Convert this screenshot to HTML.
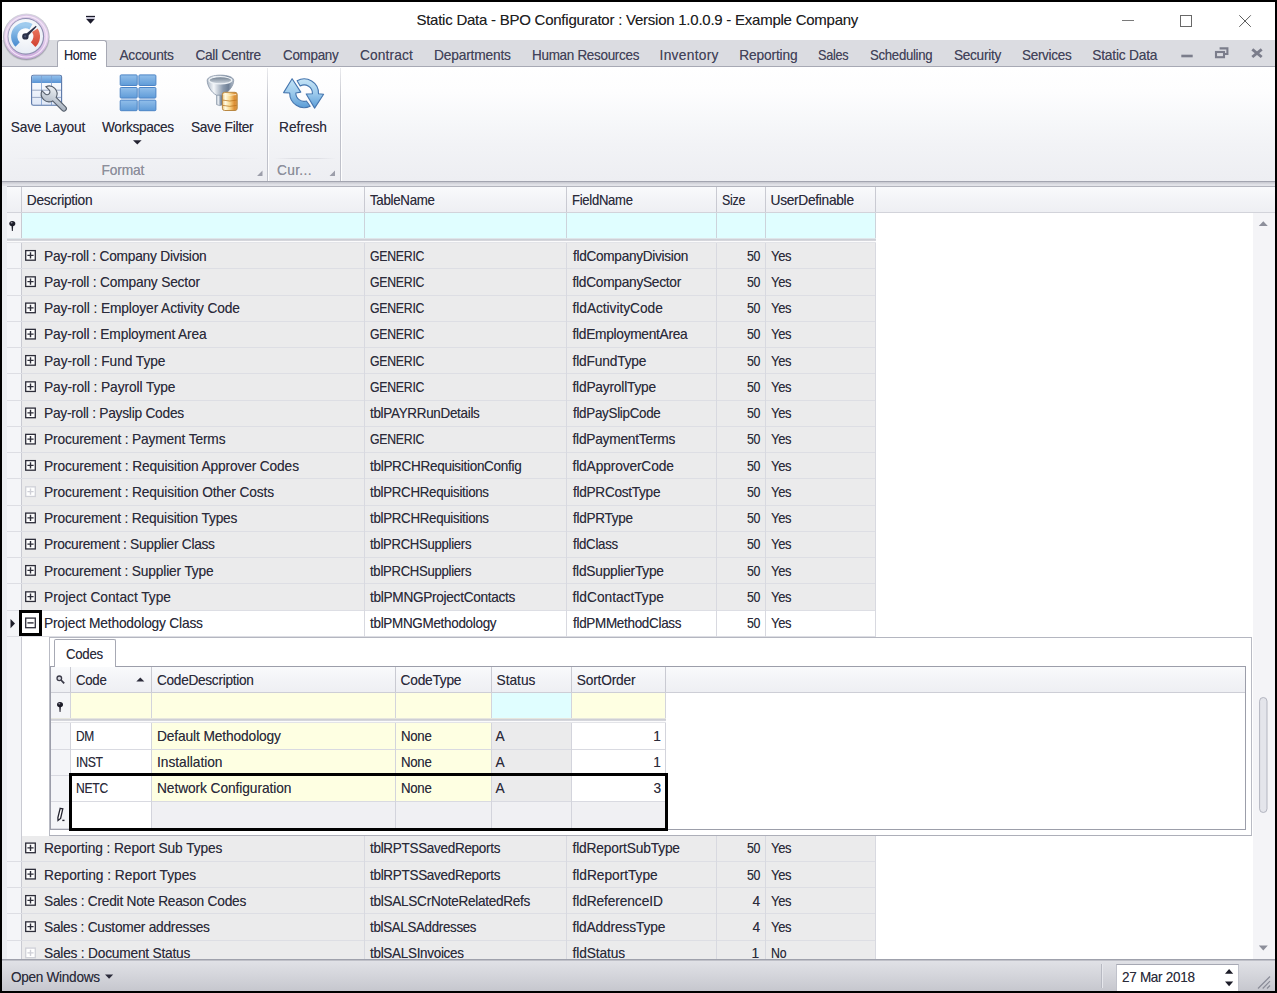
<!DOCTYPE html>
<html><head><meta charset="utf-8"><title>Static Data - BPO Configurator</title>
<style>
html,body{margin:0;padding:0;background:#000;}
body{width:1277px;height:993px;overflow:hidden;position:relative;font-family:"Liberation Sans",sans-serif;}
.a{position:absolute;box-sizing:border-box;}
.t{position:absolute;white-space:pre;transform-origin:0 0;text-shadow:0 0 .6px rgba(43,43,58,.45);}
svg{position:absolute;overflow:visible;}
</style></head><body>
<div class="a" style="left:2px;top:2px;width:1273px;height:989px;background:#fff"></div><span class="t" style="left:416.40px;top:11.40px;font-size:15px;line-height:17px;letter-spacing:-0.242px;color:#1f1f1f;">Static Data - BPO Configurator : Version 1.0.0.9 - Example Company</span><svg style="left:1100px;top:4px" width="170" height="34" viewBox="1100 4 170 34"><g fill="none" stroke="#686868" stroke-width="1"><path d="M1122 20.5H1134" stroke="#7a7a7a"/><rect x="1180.5" y="15.5" width="11" height="11"/><path d="M1239.3 15.3L1250.8 26.8M1250.8 15.3L1239.3 26.8" stroke="#5a5a5a"/></g></svg><svg style="left:84px;top:12px" width="14" height="14" viewBox="84 12 14 14"><rect x="86.2" y="17" width="8.6" height="2" fill="#c9c8d9"/><path d="M86 16.45H95" stroke="#1c1c2c" stroke-width="1.2"/><path d="M86.2 18.9H94.8L90.5 23.8Z" fill="#1c1c2c"/></svg><div class="a" style="left:2px;top:40px;width:1273px;height:27px;background:#dbdce1;border-bottom:1px solid #a7a9b4"></div><div class="a" style="left:57px;top:40px;width:50px;height:27px;background:#fff;border:1px solid #a7a9b4;border-bottom:none;border-radius:3px 3px 0 0"></div><span class="t" style="left:64.00px;top:47.50px;font-size:13.75px;line-height:15px;letter-spacing:-0.300px;color:#23233a;transform:scaleX(0.9141);">Home</span><span class="t" style="left:119.40px;top:47.50px;font-size:13.75px;line-height:15px;letter-spacing:-0.280px;color:#42435a;">Accounts</span><span class="t" style="left:195.40px;top:47.50px;font-size:13.75px;line-height:15px;letter-spacing:-0.300px;color:#42435a;">Call Centre</span><span class="t" style="left:282.80px;top:47.50px;font-size:13.75px;line-height:15px;letter-spacing:-0.300px;color:#42435a;transform:scaleX(0.9762);">Company</span><span class="t" style="left:360.00px;top:47.50px;font-size:13.75px;line-height:15px;letter-spacing:0.114px;color:#42435a;">Contract</span><span class="t" style="left:434.00px;top:47.50px;font-size:13.75px;line-height:15px;letter-spacing:-0.172px;color:#42435a;">Departments</span><span class="t" style="left:531.70px;top:47.50px;font-size:13.75px;line-height:15px;letter-spacing:-0.300px;color:#42435a;transform:scaleX(0.9793);">Human Resources</span><span class="t" style="left:659.50px;top:47.50px;font-size:13.75px;line-height:15px;letter-spacing:0.305px;color:#42435a;">Inventory</span><span class="t" style="left:739.20px;top:47.50px;font-size:13.75px;line-height:15px;letter-spacing:-0.151px;color:#42435a;">Reporting</span><span class="t" style="left:818.00px;top:47.50px;font-size:13.75px;line-height:15px;letter-spacing:-0.300px;color:#42435a;transform:scaleX(0.9215);">Sales</span><span class="t" style="left:869.80px;top:47.50px;font-size:13.75px;line-height:15px;letter-spacing:-0.300px;color:#42435a;transform:scaleX(0.9582);">Scheduling</span><span class="t" style="left:953.60px;top:47.50px;font-size:13.75px;line-height:15px;letter-spacing:-0.300px;color:#42435a;transform:scaleX(0.9922);">Security</span><span class="t" style="left:1022.00px;top:47.50px;font-size:13.75px;line-height:15px;letter-spacing:-0.300px;color:#42435a;transform:scaleX(0.9815);">Services</span><span class="t" style="left:1092.20px;top:47.50px;font-size:13.75px;line-height:15px;letter-spacing:-0.192px;color:#42435a;">Static Data</span><svg style="left:1175px;top:42px" width="95" height="22" viewBox="1175 42 95 22"><g fill="none" stroke="#7b7d8b"><path d="M1181.3 56H1192.7" stroke-width="2.6"/><path d="M1219.6 48.4h7.8v5.6h-3" stroke-width="2.1"/><rect x="1216" y="52" width="8" height="5.2" stroke-width="2.1"/><path d="M1252.3 49.3L1261.7 57M1261.7 49.3L1252.3 57" stroke-width="2.9"/></g></svg><div class="a" style="left:2px;top:67px;width:1273px;height:114px;background:linear-gradient(#ffffff 0%,#fdfdfe 22%,#f7f8fa 45%,#f2f3f6 68%,#edeef2 100%)"></div><div class="a" style="left:2px;top:181px;width:1273px;height:1px;background:#a3a5b0"></div><div class="a" style="left:2px;top:182px;width:1273px;height:4px;background:linear-gradient(#c6c7cf,#e3e4e9 70%)"></div><div class="a" style="left:267px;top:68px;width:1px;height:113px;background:linear-gradient(rgba(190,192,201,.3),#bfc1ca 30%,#bfc1ca)"></div><div class="a" style="left:268px;top:68px;width:1px;height:113px;background:rgba(255,255,255,.9)"></div><div class="a" style="left:340px;top:68px;width:1px;height:113px;background:linear-gradient(rgba(190,192,201,.3),#bfc1ca 30%,#bfc1ca)"></div><div class="a" style="left:341px;top:68px;width:1px;height:113px;background:rgba(255,255,255,.9)"></div><div class="a" style="left:12px;top:158px;width:250px;height:1px;background:linear-gradient(90deg,rgba(200,202,210,0),#dddee4 30%,#dddee4 70%,rgba(200,202,210,0))"></div><div class="a" style="left:274px;top:158px;width:62px;height:1px;background:linear-gradient(90deg,rgba(200,202,210,0),#dddee4 30%,#dddee4 70%,rgba(200,202,210,0))"></div><span class="t" style="left:10.70px;top:119.90px;font-size:13.75px;line-height:15px;letter-spacing:-0.178px;color:#2b2b3a;">Save Layout</span><span class="t" style="left:102.00px;top:119.90px;font-size:13.75px;line-height:15px;letter-spacing:-0.300px;color:#2b2b3a;transform:scaleX(0.9930);">Workspaces</span><span class="t" style="left:190.90px;top:119.90px;font-size:13.75px;line-height:15px;letter-spacing:-0.295px;color:#2b2b3a;">Save Filter</span><span class="t" style="left:279.00px;top:119.90px;font-size:13.75px;line-height:15px;letter-spacing:-0.023px;color:#2b2b3a;">Refresh</span><span class="t" style="left:101.50px;top:162.80px;font-size:13.75px;line-height:15px;letter-spacing:-0.155px;color:#8d8f9c;">Format</span><span class="t" style="left:277.00px;top:162.80px;font-size:13.75px;line-height:15px;letter-spacing:0.322px;color:#8d8f9c;">Cur...</span><svg style="left:130px;top:138px" width="14" height="8" viewBox="130 138 14 8"><path d="M133 140.3H141.6L137.3 144.6Z" fill="#222230"/></svg><svg style="left:254px;top:168px" width="84" height="10" viewBox="254 168 84 10"><path d="M262.5 170.5V176H257Z M335 170.5V176H329.5Z" fill="#9c9eaa"/></svg><svg style="left:0;top:8px" width="56" height="58" viewBox="0 8 56 58"><defs><linearGradient id="ag1" x1="0" y1="0" x2="0" y2="1"><stop offset="0" stop-color="#d6d6de"/><stop offset="1" stop-color="#9d9daa"/></linearGradient><linearGradient id="ag2" x1="0" y1="0" x2="0" y2="1"><stop offset="0" stop-color="#d9c6e6"/><stop offset=".5" stop-color="#e9d3f0"/><stop offset="1" stop-color="#caa9dc"/></linearGradient><radialGradient id="ag3" cx=".5" cy=".35" r=".7"><stop offset="0" stop-color="#ffffff"/><stop offset="1" stop-color="#e6ebf4"/></radialGradient><linearGradient id="ag4" x1="0" y1="0" x2="0" y2="1"><stop offset="0" stop-color="#9fcbee"/><stop offset="1" stop-color="#4f90d2"/></linearGradient><linearGradient id="ag5" x1="0" y1="0" x2="0" y2="1"><stop offset="0" stop-color="#e8705a"/><stop offset="1" stop-color="#d44736"/></linearGradient></defs><circle cx="26.3" cy="37.4" r="23.4" fill="rgba(120,120,135,.25)"/><circle cx="26.3" cy="36.7" r="23.2" fill="url(#ag1)"/><circle cx="26.3" cy="36.7" r="22.2" fill="url(#ag2)"/><circle cx="26.3" cy="36.7" r="20.3" fill="none" stroke="#f3e6f7" stroke-width="1.2"/><circle cx="25.9" cy="36.4" r="18.3" fill="#8e8fb0"/><circle cx="25.7" cy="36.3" r="17.3" fill="url(#ag3)"/><path d="M17.62 44.46A11.20 11.20 0 0 1 31.00 26.70" fill="none" stroke="url(#ag4)" stroke-width="6.20"/><path d="M34.88 30.25A11.30 11.30 0 0 1 33.11 44.66" fill="none" stroke="url(#ag5)" stroke-width="6.60"/><path d="M24.3 35.2L35.9 25.8L36.6 26.7L26.6 37.6Z" fill="#2b3048"/><circle cx="25.4" cy="36.4" r="3.2" fill="#2b3048"/><circle cx="25.2" cy="36.3" r="1.1" fill="#4d5678"/></svg><svg style="left:28px;top:72px" width="42" height="42" viewBox="28 72 42 42"><defs><linearGradient id="sl1" x1="0" y1="0" x2="0" y2="1"><stop offset="0" stop-color="#92c0ec"/><stop offset="1" stop-color="#5a94d4"/></linearGradient><linearGradient id="sl2" x1="0" y1="0" x2="0" y2="1"><stop offset="0" stop-color="#ffffff"/><stop offset="1" stop-color="#dfe8f7"/></linearGradient><linearGradient id="sl3" x1="0" y1="0" x2="1" y2="1"><stop offset="0" stop-color="#f4f6f8"/><stop offset=".5" stop-color="#c4ccd6"/><stop offset="1" stop-color="#8f9aaa"/></linearGradient></defs><rect x="31.6" y="75.2" width="30" height="30" rx="1.8" fill="url(#sl2)" stroke="#5876a8" stroke-width="1.1"/><path d="M32.1 76.9q0-1.2 1.2-1.2h26.6q1.2 0 1.2 1.2V83H32.1Z" fill="url(#sl1)"/><path d="M41.5 75.7V105M51.5 75.7V105" stroke="#7f9fcf" stroke-width="1" opacity=".8"/><path d="M32.1 90.2H61M32.1 97.4H61" stroke="#8b9cbb" stroke-width="1" opacity=".85"/><g transform="translate(49.1 93.9) rotate(45)"><path d="M-7.38 -2.8A7.9 7.9 0 0 1 7.5 -2.45L20.9 -2.45A2.45 2.45 0 0 1 20.9 2.45L7.5 2.45A7.9 7.9 0 0 1 -7.38 2.8L-2.8 2.8A2.8 2.8 0 0 0 -2.8 -2.8Z" fill="url(#sl3)" stroke="#555e6b" stroke-width="1.1"/></g></svg><svg style="left:118px;top:72px" width="42" height="42" viewBox="118 72 42 42"><defs><linearGradient id="ws1" x1="0" y1="0" x2="0" y2="1"><stop offset="0" stop-color="#92bfea"/><stop offset="1" stop-color="#5f9bd8"/></linearGradient></defs><rect x="120.2" y="74.9" width="17" height="10.6" rx="1" fill="url(#ws1)" stroke="#4c84c6" stroke-width="1"/><rect x="138.9" y="74.9" width="17" height="10.6" rx="1" fill="url(#ws1)" stroke="#4c84c6" stroke-width="1"/><rect x="120.2" y="87.5" width="17" height="10.6" rx="1" fill="url(#ws1)" stroke="#4c84c6" stroke-width="1"/><rect x="138.9" y="87.5" width="17" height="10.6" rx="1" fill="url(#ws1)" stroke="#4c84c6" stroke-width="1"/><rect x="120.2" y="100.1" width="17" height="10.6" rx="1" fill="url(#ws1)" stroke="#4c84c6" stroke-width="1"/><rect x="138.9" y="100.1" width="17" height="10.6" rx="1" fill="url(#ws1)" stroke="#4c84c6" stroke-width="1"/></svg><svg style="left:204px;top:72px" width="38" height="42" viewBox="204 72 38 42"><defs><linearGradient id="sf1" x1="0" y1="0" x2="1" y2="0"><stop offset="0" stop-color="#aeb9c6"/><stop offset=".25" stop-color="#f4f7fa"/><stop offset=".6" stop-color="#8c9bae"/><stop offset=".8" stop-color="#6f8096"/><stop offset="1" stop-color="#b9c3cf"/></linearGradient><linearGradient id="sf2" x1="0" y1="0" x2="0" y2="1"><stop offset="0" stop-color="#6c7b8c"/><stop offset="1" stop-color="#d5dce4"/></linearGradient><linearGradient id="sf3" x1="0" y1="0" x2="1" y2="0"><stop offset="0" stop-color="#edc47c"/><stop offset=".2" stop-color="#fffbe4"/><stop offset=".5" stop-color="#f9d88e"/><stop offset=".8" stop-color="#de9136"/><stop offset="1" stop-color="#d6954a"/></linearGradient></defs><path d="M216.6 92H222.9V104.6Q219.7 106.6 216.6 104.6Z" fill="url(#sf1)" stroke="#8391a2" stroke-width=".7"/><path d="M207.2 80.4C207.2 73.4 233.7 73.4 233.7 80.4C233.7 86 228 92.5 223.2 95.2H216.4C211.5 92.5 207.2 86 207.2 80.4Z" fill="url(#sf1)" stroke="#8492a4" stroke-width=".8"/><ellipse cx="220.4" cy="80.3" rx="11.4" ry="3.6" fill="url(#sf2)" stroke="#eef2f6" stroke-width="1.2"/><rect x="222.4" y="92.3" width="14.8" height="18.2" rx="2.2" fill="url(#sf3)" stroke="#b98842" stroke-width="1"/><path d="M222.9 100.1Q229.8 102 236.7 100.1M222.9 105.4Q229.8 107.3 236.7 105.4" fill="none" stroke="#b9741f" stroke-width="1" opacity=".75"/><path d="M223.4 94.5Q229.8 96 236.2 94.5" fill="none" stroke="#fff7dc" stroke-width="1" opacity=".8"/></svg><svg style="left:280px;top:74px" width="48" height="40" viewBox="280 74 48 40"><defs><linearGradient id="rf1" x1="0" y1="0" x2="0" y2="1"><stop offset="0" stop-color="#c5e4f6"/><stop offset=".5" stop-color="#9ccaec"/><stop offset="1" stop-color="#5b9cd6"/></linearGradient></defs><g fill="url(#rf1)" stroke="#4575ae" stroke-width="1.1" stroke-linejoin="round"><path d="M297.1 80.7A14.4 14.4 0 0 1 318.5 93.8L323.6 94.2L314.6 108.1L306.2 94L312.4 93.8A8.3 8.3 0 0 0 300.2 86Z"/><path d="M292.1 78.7L300.8 92.1L295.8 93A8.3 8.3 0 0 0 306.4 101L310.2 106.2A14.4 14.4 0 0 1 289.7 93L283.6 92.6Z"/></g></svg><div class="a" style="left:2px;top:186px;width:1273px;height:773px;background:#eceef2"></div><div class="a" style="left:7px;top:186px;width:1268px;height:773px;background:#fff"></div><div class="a" style="left:7px;top:186px;width:1268px;height:27px;background:linear-gradient(#f9fafc,#f3f4f7 50%,#eeeff3);border-top:1px solid #b3b5be;border-bottom:1px solid #d2d3da"></div><div class="a" style="left:21px;top:187px;width:1px;height:25px;background:#c9cad2"></div><div class="a" style="left:364px;top:187px;width:1px;height:25px;background:#c9cad2"></div><div class="a" style="left:566px;top:187px;width:1px;height:25px;background:#c9cad2"></div><div class="a" style="left:716px;top:187px;width:1px;height:25px;background:#c9cad2"></div><div class="a" style="left:765px;top:187px;width:1px;height:25px;background:#c9cad2"></div><div class="a" style="left:875px;top:187px;width:1px;height:25px;background:#c9cad2"></div><span class="t" style="left:26.80px;top:192.80px;font-size:13.75px;line-height:15px;letter-spacing:-0.300px;color:#2b2b3a;">Description</span><span class="t" style="left:370.10px;top:192.80px;font-size:13.75px;line-height:15px;letter-spacing:-0.300px;color:#2b2b3a;transform:scaleX(0.9665);">TableName</span><span class="t" style="left:571.80px;top:192.80px;font-size:13.75px;line-height:15px;letter-spacing:-0.300px;color:#2b2b3a;transform:scaleX(0.9505);">FieldName</span><span class="t" style="left:721.70px;top:192.80px;font-size:13.75px;line-height:15px;letter-spacing:-0.300px;color:#2b2b3a;transform:scaleX(0.9019);">Size</span><span class="t" style="left:770.50px;top:192.80px;font-size:13.75px;line-height:15px;letter-spacing:-0.300px;color:#2b2b3a;">UserDefinable</span><div class="a" style="left:7px;top:213px;width:15px;height:26px;background:#f4f5f8;border-right:1px solid #c9cad2"></div><div class="a" style="left:22px;top:213px;width:854px;height:26px;background:#e0feff"></div><div class="a" style="left:364px;top:213px;width:1px;height:26px;background:#cdd3db"></div><div class="a" style="left:566px;top:213px;width:1px;height:26px;background:#cdd3db"></div><div class="a" style="left:716px;top:213px;width:1px;height:26px;background:#cdd3db"></div><div class="a" style="left:765px;top:213px;width:1px;height:26px;background:#cdd3db"></div><div class="a" style="left:875px;top:213px;width:1px;height:26px;background:#cdd3db"></div><svg style="left:8px;top:219px" width="10" height="14" viewBox="8 219 10 14"><ellipse cx="12.3" cy="223.5" rx="3" ry="2.6" fill="#1c1c28"/><path d="M11.4 224.5L11.9 231h.9l.5-6.5Z" fill="#1c1c28"/><ellipse cx="11.6" cy="222.8" rx="1" ry=".7" fill="#9a9aa6"/></svg><div class="a" style="left:7px;top:238px;width:869px;height:1px;background:#dfe6ea"></div><div class="a" style="left:7px;top:239px;width:869px;height:2px;background:linear-gradient(#cbccd3,#d9dadf)"></div><div class="a" style="left:7px;top:241px;width:869px;height:1px;background:#fbfbfc"></div><div class="a" style="left:7px;top:242px;width:869px;height:1px;background:#e3e4e8"></div><div class="a" style="left:7px;top:243px;width:15px;height:716px;background:#f4f5f8;border-right:1px solid #c9cad2"></div><div class="a" style="left:0;top:0;width:1277px;height:959px;overflow:hidden"><div class="a" style="left:22px;top:243px;width:854px;height:26.25px;background:#ebebec;border-bottom:1px solid #dddee4"></div><div class="a" style="left:7px;top:268.25px;width:15px;height:1px;background:#dddee4"></div><div class="a" style="left:364px;top:243px;width:1px;height:26.25px;background:#d8d9e0"></div><div class="a" style="left:566px;top:243px;width:1px;height:26.25px;background:#d8d9e0"></div><div class="a" style="left:716px;top:243px;width:1px;height:26.25px;background:#d8d9e0"></div><div class="a" style="left:765px;top:243px;width:1px;height:26.25px;background:#d8d9e0"></div><div class="a" style="left:875px;top:243px;width:1px;height:26.25px;background:#d8d9e0"></div><span class="t" style="left:44.00px;top:248.60px;font-size:13.75px;line-height:15px;letter-spacing:-0.237px;color:#2b2b3a;">Pay-roll : Company Division</span><span class="t" style="left:369.60px;top:248.60px;font-size:13.75px;line-height:15px;letter-spacing:-0.300px;color:#2b2b3a;transform:scaleX(0.8944);">GENERIC</span><span class="t" style="left:572.50px;top:248.60px;font-size:13.75px;line-height:15px;letter-spacing:-0.300px;color:#2b2b3a;transform:scaleX(0.9906);">fldCompanyDivision</span><span class="t" style="left:746.50px;top:248.60px;font-size:13.75px;line-height:15px;letter-spacing:-0.300px;color:#2b2b3a;transform:scaleX(0.9012);">50</span><span class="t" style="left:771.00px;top:248.60px;font-size:13.75px;line-height:15px;letter-spacing:-0.300px;color:#2b2b3a;transform:scaleX(0.9433);">Yes</span><div class="a" style="left:22px;top:269.25px;width:854px;height:26.25px;background:#ebebec;border-bottom:1px solid #dddee4"></div><div class="a" style="left:7px;top:294.5px;width:15px;height:1px;background:#dddee4"></div><div class="a" style="left:364px;top:269.25px;width:1px;height:26.25px;background:#d8d9e0"></div><div class="a" style="left:566px;top:269.25px;width:1px;height:26.25px;background:#d8d9e0"></div><div class="a" style="left:716px;top:269.25px;width:1px;height:26.25px;background:#d8d9e0"></div><div class="a" style="left:765px;top:269.25px;width:1px;height:26.25px;background:#d8d9e0"></div><div class="a" style="left:875px;top:269.25px;width:1px;height:26.25px;background:#d8d9e0"></div><span class="t" style="left:44.00px;top:274.85px;font-size:13.75px;line-height:15px;letter-spacing:-0.188px;color:#2b2b3a;">Pay-roll : Company Sector</span><span class="t" style="left:369.60px;top:274.85px;font-size:13.75px;line-height:15px;letter-spacing:-0.300px;color:#2b2b3a;transform:scaleX(0.8944);">GENERIC</span><span class="t" style="left:572.50px;top:274.85px;font-size:13.75px;line-height:15px;letter-spacing:-0.289px;color:#2b2b3a;">fldCompanySector</span><span class="t" style="left:746.50px;top:274.85px;font-size:13.75px;line-height:15px;letter-spacing:-0.300px;color:#2b2b3a;transform:scaleX(0.9012);">50</span><span class="t" style="left:771.00px;top:274.85px;font-size:13.75px;line-height:15px;letter-spacing:-0.300px;color:#2b2b3a;transform:scaleX(0.9433);">Yes</span><div class="a" style="left:22px;top:295.5px;width:854px;height:26.25px;background:#ebebec;border-bottom:1px solid #dddee4"></div><div class="a" style="left:7px;top:320.75px;width:15px;height:1px;background:#dddee4"></div><div class="a" style="left:364px;top:295.5px;width:1px;height:26.25px;background:#d8d9e0"></div><div class="a" style="left:566px;top:295.5px;width:1px;height:26.25px;background:#d8d9e0"></div><div class="a" style="left:716px;top:295.5px;width:1px;height:26.25px;background:#d8d9e0"></div><div class="a" style="left:765px;top:295.5px;width:1px;height:26.25px;background:#d8d9e0"></div><div class="a" style="left:875px;top:295.5px;width:1px;height:26.25px;background:#d8d9e0"></div><span class="t" style="left:44.00px;top:301.10px;font-size:13.75px;line-height:15px;letter-spacing:-0.107px;color:#2b2b3a;">Pay-roll : Employer Activity Code</span><span class="t" style="left:369.60px;top:301.10px;font-size:13.75px;line-height:15px;letter-spacing:-0.300px;color:#2b2b3a;transform:scaleX(0.8944);">GENERIC</span><span class="t" style="left:572.50px;top:301.10px;font-size:13.75px;line-height:15px;letter-spacing:-0.046px;color:#2b2b3a;">fldActivityCode</span><span class="t" style="left:746.50px;top:301.10px;font-size:13.75px;line-height:15px;letter-spacing:-0.300px;color:#2b2b3a;transform:scaleX(0.9012);">50</span><span class="t" style="left:771.00px;top:301.10px;font-size:13.75px;line-height:15px;letter-spacing:-0.300px;color:#2b2b3a;transform:scaleX(0.9433);">Yes</span><div class="a" style="left:22px;top:321.75px;width:854px;height:26.25px;background:#ebebec;border-bottom:1px solid #dddee4"></div><div class="a" style="left:7px;top:347px;width:15px;height:1px;background:#dddee4"></div><div class="a" style="left:364px;top:321.75px;width:1px;height:26.25px;background:#d8d9e0"></div><div class="a" style="left:566px;top:321.75px;width:1px;height:26.25px;background:#d8d9e0"></div><div class="a" style="left:716px;top:321.75px;width:1px;height:26.25px;background:#d8d9e0"></div><div class="a" style="left:765px;top:321.75px;width:1px;height:26.25px;background:#d8d9e0"></div><div class="a" style="left:875px;top:321.75px;width:1px;height:26.25px;background:#d8d9e0"></div><span class="t" style="left:44.00px;top:327.35px;font-size:13.75px;line-height:15px;letter-spacing:-0.158px;color:#2b2b3a;">Pay-roll : Employment Area</span><span class="t" style="left:369.60px;top:327.35px;font-size:13.75px;line-height:15px;letter-spacing:-0.300px;color:#2b2b3a;transform:scaleX(0.8944);">GENERIC</span><span class="t" style="left:572.50px;top:327.35px;font-size:13.75px;line-height:15px;letter-spacing:-0.296px;color:#2b2b3a;">fldEmploymentArea</span><span class="t" style="left:746.50px;top:327.35px;font-size:13.75px;line-height:15px;letter-spacing:-0.300px;color:#2b2b3a;transform:scaleX(0.9012);">50</span><span class="t" style="left:771.00px;top:327.35px;font-size:13.75px;line-height:15px;letter-spacing:-0.300px;color:#2b2b3a;transform:scaleX(0.9433);">Yes</span><div class="a" style="left:22px;top:348px;width:854px;height:26.25px;background:#ebebec;border-bottom:1px solid #dddee4"></div><div class="a" style="left:7px;top:373.25px;width:15px;height:1px;background:#dddee4"></div><div class="a" style="left:364px;top:348px;width:1px;height:26.25px;background:#d8d9e0"></div><div class="a" style="left:566px;top:348px;width:1px;height:26.25px;background:#d8d9e0"></div><div class="a" style="left:716px;top:348px;width:1px;height:26.25px;background:#d8d9e0"></div><div class="a" style="left:765px;top:348px;width:1px;height:26.25px;background:#d8d9e0"></div><div class="a" style="left:875px;top:348px;width:1px;height:26.25px;background:#d8d9e0"></div><span class="t" style="left:44.00px;top:353.60px;font-size:13.75px;line-height:15px;letter-spacing:-0.073px;color:#2b2b3a;">Pay-roll : Fund Type</span><span class="t" style="left:369.60px;top:353.60px;font-size:13.75px;line-height:15px;letter-spacing:-0.300px;color:#2b2b3a;transform:scaleX(0.8944);">GENERIC</span><span class="t" style="left:572.50px;top:353.60px;font-size:13.75px;line-height:15px;letter-spacing:-0.167px;color:#2b2b3a;">fldFundType</span><span class="t" style="left:746.50px;top:353.60px;font-size:13.75px;line-height:15px;letter-spacing:-0.300px;color:#2b2b3a;transform:scaleX(0.9012);">50</span><span class="t" style="left:771.00px;top:353.60px;font-size:13.75px;line-height:15px;letter-spacing:-0.300px;color:#2b2b3a;transform:scaleX(0.9433);">Yes</span><div class="a" style="left:22px;top:374.25px;width:854px;height:26.25px;background:#ebebec;border-bottom:1px solid #dddee4"></div><div class="a" style="left:7px;top:399.5px;width:15px;height:1px;background:#dddee4"></div><div class="a" style="left:364px;top:374.25px;width:1px;height:26.25px;background:#d8d9e0"></div><div class="a" style="left:566px;top:374.25px;width:1px;height:26.25px;background:#d8d9e0"></div><div class="a" style="left:716px;top:374.25px;width:1px;height:26.25px;background:#d8d9e0"></div><div class="a" style="left:765px;top:374.25px;width:1px;height:26.25px;background:#d8d9e0"></div><div class="a" style="left:875px;top:374.25px;width:1px;height:26.25px;background:#d8d9e0"></div><span class="t" style="left:44.00px;top:379.85px;font-size:13.75px;line-height:15px;letter-spacing:-0.094px;color:#2b2b3a;">Pay-roll : Payroll Type</span><span class="t" style="left:369.60px;top:379.85px;font-size:13.75px;line-height:15px;letter-spacing:-0.300px;color:#2b2b3a;transform:scaleX(0.8944);">GENERIC</span><span class="t" style="left:572.50px;top:379.85px;font-size:13.75px;line-height:15px;letter-spacing:-0.205px;color:#2b2b3a;">fldPayrollType</span><span class="t" style="left:746.50px;top:379.85px;font-size:13.75px;line-height:15px;letter-spacing:-0.300px;color:#2b2b3a;transform:scaleX(0.9012);">50</span><span class="t" style="left:771.00px;top:379.85px;font-size:13.75px;line-height:15px;letter-spacing:-0.300px;color:#2b2b3a;transform:scaleX(0.9433);">Yes</span><div class="a" style="left:22px;top:400.5px;width:854px;height:26.25px;background:#ebebec;border-bottom:1px solid #dddee4"></div><div class="a" style="left:7px;top:425.75px;width:15px;height:1px;background:#dddee4"></div><div class="a" style="left:364px;top:400.5px;width:1px;height:26.25px;background:#d8d9e0"></div><div class="a" style="left:566px;top:400.5px;width:1px;height:26.25px;background:#d8d9e0"></div><div class="a" style="left:716px;top:400.5px;width:1px;height:26.25px;background:#d8d9e0"></div><div class="a" style="left:765px;top:400.5px;width:1px;height:26.25px;background:#d8d9e0"></div><div class="a" style="left:875px;top:400.5px;width:1px;height:26.25px;background:#d8d9e0"></div><span class="t" style="left:44.00px;top:406.10px;font-size:13.75px;line-height:15px;letter-spacing:-0.251px;color:#2b2b3a;">Pay-roll : Payslip Codes</span><span class="t" style="left:370.00px;top:406.10px;font-size:13.75px;line-height:15px;letter-spacing:-0.300px;color:#2b2b3a;transform:scaleX(0.9770);">tblPAYRRunDetails</span><span class="t" style="left:572.50px;top:406.10px;font-size:13.75px;line-height:15px;letter-spacing:-0.300px;color:#2b2b3a;transform:scaleX(0.9745);">fldPaySlipCode</span><span class="t" style="left:746.50px;top:406.10px;font-size:13.75px;line-height:15px;letter-spacing:-0.300px;color:#2b2b3a;transform:scaleX(0.9012);">50</span><span class="t" style="left:771.00px;top:406.10px;font-size:13.75px;line-height:15px;letter-spacing:-0.300px;color:#2b2b3a;transform:scaleX(0.9433);">Yes</span><div class="a" style="left:22px;top:426.75px;width:854px;height:26.25px;background:#ebebec;border-bottom:1px solid #dddee4"></div><div class="a" style="left:7px;top:452px;width:15px;height:1px;background:#dddee4"></div><div class="a" style="left:364px;top:426.75px;width:1px;height:26.25px;background:#d8d9e0"></div><div class="a" style="left:566px;top:426.75px;width:1px;height:26.25px;background:#d8d9e0"></div><div class="a" style="left:716px;top:426.75px;width:1px;height:26.25px;background:#d8d9e0"></div><div class="a" style="left:765px;top:426.75px;width:1px;height:26.25px;background:#d8d9e0"></div><div class="a" style="left:875px;top:426.75px;width:1px;height:26.25px;background:#d8d9e0"></div><span class="t" style="left:44.00px;top:432.35px;font-size:13.75px;line-height:15px;letter-spacing:-0.151px;color:#2b2b3a;">Procurement : Payment Terms</span><span class="t" style="left:369.60px;top:432.35px;font-size:13.75px;line-height:15px;letter-spacing:-0.300px;color:#2b2b3a;transform:scaleX(0.8944);">GENERIC</span><span class="t" style="left:572.50px;top:432.35px;font-size:13.75px;line-height:15px;letter-spacing:-0.244px;color:#2b2b3a;">fldPaymentTerms</span><span class="t" style="left:746.50px;top:432.35px;font-size:13.75px;line-height:15px;letter-spacing:-0.300px;color:#2b2b3a;transform:scaleX(0.9012);">50</span><span class="t" style="left:771.00px;top:432.35px;font-size:13.75px;line-height:15px;letter-spacing:-0.300px;color:#2b2b3a;transform:scaleX(0.9433);">Yes</span><div class="a" style="left:22px;top:453px;width:854px;height:26.25px;background:#ebebec;border-bottom:1px solid #dddee4"></div><div class="a" style="left:7px;top:478.25px;width:15px;height:1px;background:#dddee4"></div><div class="a" style="left:364px;top:453px;width:1px;height:26.25px;background:#d8d9e0"></div><div class="a" style="left:566px;top:453px;width:1px;height:26.25px;background:#d8d9e0"></div><div class="a" style="left:716px;top:453px;width:1px;height:26.25px;background:#d8d9e0"></div><div class="a" style="left:765px;top:453px;width:1px;height:26.25px;background:#d8d9e0"></div><div class="a" style="left:875px;top:453px;width:1px;height:26.25px;background:#d8d9e0"></div><span class="t" style="left:44.00px;top:458.60px;font-size:13.75px;line-height:15px;letter-spacing:-0.144px;color:#2b2b3a;">Procurement : Requisition Approver Codes</span><span class="t" style="left:370.00px;top:458.60px;font-size:13.75px;line-height:15px;letter-spacing:-0.300px;color:#2b2b3a;transform:scaleX(0.9828);">tblPRCHRequisitionConfig</span><span class="t" style="left:572.50px;top:458.60px;font-size:13.75px;line-height:15px;letter-spacing:-0.134px;color:#2b2b3a;">fldApproverCode</span><span class="t" style="left:746.50px;top:458.60px;font-size:13.75px;line-height:15px;letter-spacing:-0.300px;color:#2b2b3a;transform:scaleX(0.9012);">50</span><span class="t" style="left:771.00px;top:458.60px;font-size:13.75px;line-height:15px;letter-spacing:-0.300px;color:#2b2b3a;transform:scaleX(0.9433);">Yes</span><div class="a" style="left:22px;top:479.25px;width:854px;height:26.25px;background:#ebebec;border-bottom:1px solid #dddee4"></div><div class="a" style="left:7px;top:504.5px;width:15px;height:1px;background:#dddee4"></div><div class="a" style="left:364px;top:479.25px;width:1px;height:26.25px;background:#d8d9e0"></div><div class="a" style="left:566px;top:479.25px;width:1px;height:26.25px;background:#d8d9e0"></div><div class="a" style="left:716px;top:479.25px;width:1px;height:26.25px;background:#d8d9e0"></div><div class="a" style="left:765px;top:479.25px;width:1px;height:26.25px;background:#d8d9e0"></div><div class="a" style="left:875px;top:479.25px;width:1px;height:26.25px;background:#d8d9e0"></div><span class="t" style="left:44.00px;top:484.85px;font-size:13.75px;line-height:15px;letter-spacing:-0.149px;color:#2b2b3a;">Procurement : Requisition Other Costs</span><span class="t" style="left:370.00px;top:484.85px;font-size:13.75px;line-height:15px;letter-spacing:-0.300px;color:#2b2b3a;transform:scaleX(0.9676);">tblPRCHRequisitions</span><span class="t" style="left:572.50px;top:484.85px;font-size:13.75px;line-height:15px;letter-spacing:-0.300px;color:#2b2b3a;transform:scaleX(0.9932);">fldPRCostType</span><span class="t" style="left:746.50px;top:484.85px;font-size:13.75px;line-height:15px;letter-spacing:-0.300px;color:#2b2b3a;transform:scaleX(0.9012);">50</span><span class="t" style="left:771.00px;top:484.85px;font-size:13.75px;line-height:15px;letter-spacing:-0.300px;color:#2b2b3a;transform:scaleX(0.9433);">Yes</span><div class="a" style="left:22px;top:505.5px;width:854px;height:26.25px;background:#ebebec;border-bottom:1px solid #dddee4"></div><div class="a" style="left:7px;top:530.75px;width:15px;height:1px;background:#dddee4"></div><div class="a" style="left:364px;top:505.5px;width:1px;height:26.25px;background:#d8d9e0"></div><div class="a" style="left:566px;top:505.5px;width:1px;height:26.25px;background:#d8d9e0"></div><div class="a" style="left:716px;top:505.5px;width:1px;height:26.25px;background:#d8d9e0"></div><div class="a" style="left:765px;top:505.5px;width:1px;height:26.25px;background:#d8d9e0"></div><div class="a" style="left:875px;top:505.5px;width:1px;height:26.25px;background:#d8d9e0"></div><span class="t" style="left:44.00px;top:511.10px;font-size:13.75px;line-height:15px;letter-spacing:-0.166px;color:#2b2b3a;">Procurement : Requisition Types</span><span class="t" style="left:370.00px;top:511.10px;font-size:13.75px;line-height:15px;letter-spacing:-0.300px;color:#2b2b3a;transform:scaleX(0.9676);">tblPRCHRequisitions</span><span class="t" style="left:572.50px;top:511.10px;font-size:13.75px;line-height:15px;letter-spacing:-0.300px;color:#2b2b3a;transform:scaleX(0.9857);">fldPRType</span><span class="t" style="left:746.50px;top:511.10px;font-size:13.75px;line-height:15px;letter-spacing:-0.300px;color:#2b2b3a;transform:scaleX(0.9012);">50</span><span class="t" style="left:771.00px;top:511.10px;font-size:13.75px;line-height:15px;letter-spacing:-0.300px;color:#2b2b3a;transform:scaleX(0.9433);">Yes</span><div class="a" style="left:22px;top:531.75px;width:854px;height:26.25px;background:#ebebec;border-bottom:1px solid #dddee4"></div><div class="a" style="left:7px;top:557px;width:15px;height:1px;background:#dddee4"></div><div class="a" style="left:364px;top:531.75px;width:1px;height:26.25px;background:#d8d9e0"></div><div class="a" style="left:566px;top:531.75px;width:1px;height:26.25px;background:#d8d9e0"></div><div class="a" style="left:716px;top:531.75px;width:1px;height:26.25px;background:#d8d9e0"></div><div class="a" style="left:765px;top:531.75px;width:1px;height:26.25px;background:#d8d9e0"></div><div class="a" style="left:875px;top:531.75px;width:1px;height:26.25px;background:#d8d9e0"></div><span class="t" style="left:44.00px;top:537.35px;font-size:13.75px;line-height:15px;letter-spacing:-0.290px;color:#2b2b3a;">Procurement : Supplier Class</span><span class="t" style="left:370.00px;top:537.35px;font-size:13.75px;line-height:15px;letter-spacing:-0.300px;color:#2b2b3a;transform:scaleX(0.9547);">tblPRCHSuppliers</span><span class="t" style="left:572.50px;top:537.35px;font-size:13.75px;line-height:15px;letter-spacing:-0.300px;color:#2b2b3a;transform:scaleX(0.9635);">fldClass</span><span class="t" style="left:746.50px;top:537.35px;font-size:13.75px;line-height:15px;letter-spacing:-0.300px;color:#2b2b3a;transform:scaleX(0.9012);">50</span><span class="t" style="left:771.00px;top:537.35px;font-size:13.75px;line-height:15px;letter-spacing:-0.300px;color:#2b2b3a;transform:scaleX(0.9433);">Yes</span><div class="a" style="left:22px;top:558px;width:854px;height:26.25px;background:#ebebec;border-bottom:1px solid #dddee4"></div><div class="a" style="left:7px;top:583.25px;width:15px;height:1px;background:#dddee4"></div><div class="a" style="left:364px;top:558px;width:1px;height:26.25px;background:#d8d9e0"></div><div class="a" style="left:566px;top:558px;width:1px;height:26.25px;background:#d8d9e0"></div><div class="a" style="left:716px;top:558px;width:1px;height:26.25px;background:#d8d9e0"></div><div class="a" style="left:765px;top:558px;width:1px;height:26.25px;background:#d8d9e0"></div><div class="a" style="left:875px;top:558px;width:1px;height:26.25px;background:#d8d9e0"></div><span class="t" style="left:44.00px;top:563.60px;font-size:13.75px;line-height:15px;letter-spacing:-0.165px;color:#2b2b3a;">Procurement : Supplier Type</span><span class="t" style="left:370.00px;top:563.60px;font-size:13.75px;line-height:15px;letter-spacing:-0.300px;color:#2b2b3a;transform:scaleX(0.9547);">tblPRCHSuppliers</span><span class="t" style="left:572.50px;top:563.60px;font-size:13.75px;line-height:15px;letter-spacing:-0.233px;color:#2b2b3a;">fldSupplierType</span><span class="t" style="left:746.50px;top:563.60px;font-size:13.75px;line-height:15px;letter-spacing:-0.300px;color:#2b2b3a;transform:scaleX(0.9012);">50</span><span class="t" style="left:771.00px;top:563.60px;font-size:13.75px;line-height:15px;letter-spacing:-0.300px;color:#2b2b3a;transform:scaleX(0.9433);">Yes</span><div class="a" style="left:22px;top:584.25px;width:854px;height:26.25px;background:#ebebec;border-bottom:1px solid #dddee4"></div><div class="a" style="left:7px;top:609.5px;width:15px;height:1px;background:#dddee4"></div><div class="a" style="left:364px;top:584.25px;width:1px;height:26.25px;background:#d8d9e0"></div><div class="a" style="left:566px;top:584.25px;width:1px;height:26.25px;background:#d8d9e0"></div><div class="a" style="left:716px;top:584.25px;width:1px;height:26.25px;background:#d8d9e0"></div><div class="a" style="left:765px;top:584.25px;width:1px;height:26.25px;background:#d8d9e0"></div><div class="a" style="left:875px;top:584.25px;width:1px;height:26.25px;background:#d8d9e0"></div><span class="t" style="left:44.00px;top:589.85px;font-size:13.75px;line-height:15px;letter-spacing:-0.020px;color:#2b2b3a;">Project Contact Type</span><span class="t" style="left:370.00px;top:589.85px;font-size:13.75px;line-height:15px;letter-spacing:-0.300px;color:#2b2b3a;transform:scaleX(0.9923);">tblPMNGProjectContacts</span><span class="t" style="left:572.50px;top:589.85px;font-size:13.75px;line-height:15px;letter-spacing:-0.016px;color:#2b2b3a;">fldContactType</span><span class="t" style="left:746.50px;top:589.85px;font-size:13.75px;line-height:15px;letter-spacing:-0.300px;color:#2b2b3a;transform:scaleX(0.9012);">50</span><span class="t" style="left:771.00px;top:589.85px;font-size:13.75px;line-height:15px;letter-spacing:-0.300px;color:#2b2b3a;transform:scaleX(0.9433);">Yes</span><div class="a" style="left:22px;top:610.5px;width:854px;height:26.25px;background:#ffffff;border-bottom:1px solid #dddee4"></div><div class="a" style="left:7px;top:635.75px;width:15px;height:1px;background:#dddee4"></div><div class="a" style="left:364px;top:610.5px;width:1px;height:26.25px;background:#d8d9e0"></div><div class="a" style="left:566px;top:610.5px;width:1px;height:26.25px;background:#d8d9e0"></div><div class="a" style="left:716px;top:610.5px;width:1px;height:26.25px;background:#d8d9e0"></div><div class="a" style="left:765px;top:610.5px;width:1px;height:26.25px;background:#d8d9e0"></div><div class="a" style="left:875px;top:610.5px;width:1px;height:26.25px;background:#d8d9e0"></div><span class="t" style="left:44.00px;top:616.10px;font-size:13.75px;line-height:15px;letter-spacing:-0.190px;color:#2b2b3a;">Project Methodology Class</span><span class="t" style="left:370.00px;top:616.10px;font-size:13.75px;line-height:15px;letter-spacing:-0.300px;color:#2b2b3a;transform:scaleX(0.9782);">tblPMNGMethodology</span><span class="t" style="left:572.50px;top:616.10px;font-size:13.75px;line-height:15px;letter-spacing:-0.300px;color:#2b2b3a;transform:scaleX(0.9783);">fldPMMethodClass</span><span class="t" style="left:746.50px;top:616.10px;font-size:13.75px;line-height:15px;letter-spacing:-0.300px;color:#2b2b3a;transform:scaleX(0.9012);">50</span><span class="t" style="left:771.00px;top:616.10px;font-size:13.75px;line-height:15px;letter-spacing:-0.300px;color:#2b2b3a;transform:scaleX(0.9433);">Yes</span><div class="a" style="left:22px;top:835.5px;width:854px;height:26.25px;background:#ebebec;border-bottom:1px solid #dddee4"></div><div class="a" style="left:7px;top:860.75px;width:15px;height:1px;background:#dddee4"></div><div class="a" style="left:364px;top:835.5px;width:1px;height:26.25px;background:#d8d9e0"></div><div class="a" style="left:566px;top:835.5px;width:1px;height:26.25px;background:#d8d9e0"></div><div class="a" style="left:716px;top:835.5px;width:1px;height:26.25px;background:#d8d9e0"></div><div class="a" style="left:765px;top:835.5px;width:1px;height:26.25px;background:#d8d9e0"></div><div class="a" style="left:875px;top:835.5px;width:1px;height:26.25px;background:#d8d9e0"></div><span class="t" style="left:44.00px;top:841.30px;font-size:13.75px;line-height:15px;letter-spacing:-0.089px;color:#2b2b3a;">Reporting : Report Sub Types</span><span class="t" style="left:370.00px;top:841.30px;font-size:13.75px;line-height:15px;letter-spacing:-0.300px;color:#2b2b3a;transform:scaleX(0.9810);">tblRPTSSavedReports</span><span class="t" style="left:572.50px;top:841.30px;font-size:13.75px;line-height:15px;letter-spacing:-0.171px;color:#2b2b3a;">fldReportSubType</span><span class="t" style="left:746.50px;top:841.30px;font-size:13.75px;line-height:15px;letter-spacing:-0.300px;color:#2b2b3a;transform:scaleX(0.9012);">50</span><span class="t" style="left:771.00px;top:841.30px;font-size:13.75px;line-height:15px;letter-spacing:-0.300px;color:#2b2b3a;transform:scaleX(0.9433);">Yes</span><div class="a" style="left:22px;top:861.75px;width:854px;height:26.25px;background:#ebebec;border-bottom:1px solid #dddee4"></div><div class="a" style="left:7px;top:887px;width:15px;height:1px;background:#dddee4"></div><div class="a" style="left:364px;top:861.75px;width:1px;height:26.25px;background:#d8d9e0"></div><div class="a" style="left:566px;top:861.75px;width:1px;height:26.25px;background:#d8d9e0"></div><div class="a" style="left:716px;top:861.75px;width:1px;height:26.25px;background:#d8d9e0"></div><div class="a" style="left:765px;top:861.75px;width:1px;height:26.25px;background:#d8d9e0"></div><div class="a" style="left:875px;top:861.75px;width:1px;height:26.25px;background:#d8d9e0"></div><span class="t" style="left:44.00px;top:867.55px;font-size:13.75px;line-height:15px;letter-spacing:-0.018px;color:#2b2b3a;">Reporting : Report Types</span><span class="t" style="left:370.00px;top:867.55px;font-size:13.75px;line-height:15px;letter-spacing:-0.300px;color:#2b2b3a;transform:scaleX(0.9810);">tblRPTSSavedReports</span><span class="t" style="left:572.50px;top:867.55px;font-size:13.75px;line-height:15px;letter-spacing:-0.033px;color:#2b2b3a;">fldReportType</span><span class="t" style="left:746.50px;top:867.55px;font-size:13.75px;line-height:15px;letter-spacing:-0.300px;color:#2b2b3a;transform:scaleX(0.9012);">50</span><span class="t" style="left:771.00px;top:867.55px;font-size:13.75px;line-height:15px;letter-spacing:-0.300px;color:#2b2b3a;transform:scaleX(0.9433);">Yes</span><div class="a" style="left:22px;top:888px;width:854px;height:26.25px;background:#ebebec;border-bottom:1px solid #dddee4"></div><div class="a" style="left:7px;top:913.25px;width:15px;height:1px;background:#dddee4"></div><div class="a" style="left:364px;top:888px;width:1px;height:26.25px;background:#d8d9e0"></div><div class="a" style="left:566px;top:888px;width:1px;height:26.25px;background:#d8d9e0"></div><div class="a" style="left:716px;top:888px;width:1px;height:26.25px;background:#d8d9e0"></div><div class="a" style="left:765px;top:888px;width:1px;height:26.25px;background:#d8d9e0"></div><div class="a" style="left:875px;top:888px;width:1px;height:26.25px;background:#d8d9e0"></div><span class="t" style="left:44.00px;top:893.80px;font-size:13.75px;line-height:15px;letter-spacing:-0.254px;color:#2b2b3a;">Sales : Credit Note Reason Codes</span><span class="t" style="left:370.00px;top:893.80px;font-size:13.75px;line-height:15px;letter-spacing:-0.300px;color:#2b2b3a;transform:scaleX(0.9901);">tblSALSCrNoteRelatedRefs</span><span class="t" style="left:572.50px;top:893.80px;font-size:13.75px;line-height:15px;letter-spacing:-0.107px;color:#2b2b3a;">fldReferenceID</span><span class="t" style="left:752.56px;top:893.80px;font-size:13.75px;line-height:15px;letter-spacing:0.000px;color:#2b2b3a;">4</span><span class="t" style="left:771.00px;top:893.80px;font-size:13.75px;line-height:15px;letter-spacing:-0.300px;color:#2b2b3a;transform:scaleX(0.9433);">Yes</span><div class="a" style="left:22px;top:914.25px;width:854px;height:26.25px;background:#ebebec;border-bottom:1px solid #dddee4"></div><div class="a" style="left:7px;top:939.5px;width:15px;height:1px;background:#dddee4"></div><div class="a" style="left:364px;top:914.25px;width:1px;height:26.25px;background:#d8d9e0"></div><div class="a" style="left:566px;top:914.25px;width:1px;height:26.25px;background:#d8d9e0"></div><div class="a" style="left:716px;top:914.25px;width:1px;height:26.25px;background:#d8d9e0"></div><div class="a" style="left:765px;top:914.25px;width:1px;height:26.25px;background:#d8d9e0"></div><div class="a" style="left:875px;top:914.25px;width:1px;height:26.25px;background:#d8d9e0"></div><span class="t" style="left:44.00px;top:920.05px;font-size:13.75px;line-height:15px;letter-spacing:-0.269px;color:#2b2b3a;">Sales : Customer addresses</span><span class="t" style="left:370.00px;top:920.05px;font-size:13.75px;line-height:15px;letter-spacing:-0.300px;color:#2b2b3a;transform:scaleX(0.9668);">tblSALSAddresses</span><span class="t" style="left:572.50px;top:920.05px;font-size:13.75px;line-height:15px;letter-spacing:-0.151px;color:#2b2b3a;">fldAddressType</span><span class="t" style="left:752.56px;top:920.05px;font-size:13.75px;line-height:15px;letter-spacing:0.000px;color:#2b2b3a;">4</span><span class="t" style="left:771.00px;top:920.05px;font-size:13.75px;line-height:15px;letter-spacing:-0.300px;color:#2b2b3a;transform:scaleX(0.9433);">Yes</span><div class="a" style="left:22px;top:940.5px;width:854px;height:26.25px;background:#ebebec;border-bottom:1px solid #dddee4"></div><div class="a" style="left:7px;top:965.75px;width:15px;height:1px;background:#dddee4"></div><div class="a" style="left:364px;top:940.5px;width:1px;height:26.25px;background:#d8d9e0"></div><div class="a" style="left:566px;top:940.5px;width:1px;height:26.25px;background:#d8d9e0"></div><div class="a" style="left:716px;top:940.5px;width:1px;height:26.25px;background:#d8d9e0"></div><div class="a" style="left:765px;top:940.5px;width:1px;height:26.25px;background:#d8d9e0"></div><div class="a" style="left:875px;top:940.5px;width:1px;height:26.25px;background:#d8d9e0"></div><span class="t" style="left:44.00px;top:946.30px;font-size:13.75px;line-height:15px;letter-spacing:-0.224px;color:#2b2b3a;">Sales : Document Status</span><span class="t" style="left:370.00px;top:946.30px;font-size:13.75px;line-height:15px;letter-spacing:-0.300px;color:#2b2b3a;transform:scaleX(0.9799);">tblSALSInvoices</span><span class="t" style="left:572.50px;top:946.30px;font-size:13.75px;line-height:15px;letter-spacing:-0.102px;color:#2b2b3a;">fldStatus</span><span class="t" style="left:751.56px;top:946.30px;font-size:13.75px;line-height:15px;letter-spacing:0.000px;color:#2b2b3a;">1</span><span class="t" style="left:771.00px;top:946.30px;font-size:13.75px;line-height:15px;letter-spacing:-0.300px;color:#2b2b3a;transform:scaleX(0.8979);">No</span><svg style="left:0;top:0" width="60" height="958" viewBox="0 0 60 958"><g transform="translate(25 249.9)"><rect x=".7" y=".7" width="9.6" height="9.6" fill="#fff" stroke="#2d2d39" stroke-width="1.3"/><path d="M2.4 5.5H8.6M5.5 2.4V8.6" stroke="#2d2d39" stroke-width="1.4" fill="none"/></g><g transform="translate(25 276.15)"><rect x=".7" y=".7" width="9.6" height="9.6" fill="#fff" stroke="#2d2d39" stroke-width="1.3"/><path d="M2.4 5.5H8.6M5.5 2.4V8.6" stroke="#2d2d39" stroke-width="1.4" fill="none"/></g><g transform="translate(25 302.4)"><rect x=".7" y=".7" width="9.6" height="9.6" fill="#fff" stroke="#2d2d39" stroke-width="1.3"/><path d="M2.4 5.5H8.6M5.5 2.4V8.6" stroke="#2d2d39" stroke-width="1.4" fill="none"/></g><g transform="translate(25 328.65)"><rect x=".7" y=".7" width="9.6" height="9.6" fill="#fff" stroke="#2d2d39" stroke-width="1.3"/><path d="M2.4 5.5H8.6M5.5 2.4V8.6" stroke="#2d2d39" stroke-width="1.4" fill="none"/></g><g transform="translate(25 354.9)"><rect x=".7" y=".7" width="9.6" height="9.6" fill="#fff" stroke="#2d2d39" stroke-width="1.3"/><path d="M2.4 5.5H8.6M5.5 2.4V8.6" stroke="#2d2d39" stroke-width="1.4" fill="none"/></g><g transform="translate(25 381.15)"><rect x=".7" y=".7" width="9.6" height="9.6" fill="#fff" stroke="#2d2d39" stroke-width="1.3"/><path d="M2.4 5.5H8.6M5.5 2.4V8.6" stroke="#2d2d39" stroke-width="1.4" fill="none"/></g><g transform="translate(25 407.4)"><rect x=".7" y=".7" width="9.6" height="9.6" fill="#fff" stroke="#2d2d39" stroke-width="1.3"/><path d="M2.4 5.5H8.6M5.5 2.4V8.6" stroke="#2d2d39" stroke-width="1.4" fill="none"/></g><g transform="translate(25 433.65)"><rect x=".7" y=".7" width="9.6" height="9.6" fill="#fff" stroke="#2d2d39" stroke-width="1.3"/><path d="M2.4 5.5H8.6M5.5 2.4V8.6" stroke="#2d2d39" stroke-width="1.4" fill="none"/></g><g transform="translate(25 459.9)"><rect x=".7" y=".7" width="9.6" height="9.6" fill="#fff" stroke="#2d2d39" stroke-width="1.3"/><path d="M2.4 5.5H8.6M5.5 2.4V8.6" stroke="#2d2d39" stroke-width="1.4" fill="none"/></g><g transform="translate(25 486.15)"><rect x=".7" y=".7" width="9.6" height="9.6" fill="#fff" stroke="#cfd0d7" stroke-width="1.3"/><path d="M2.4 5.5H8.6M5.5 2.4V8.6" stroke="#cfd0d7" stroke-width="1.4" fill="none"/></g><g transform="translate(25 512.4)"><rect x=".7" y=".7" width="9.6" height="9.6" fill="#fff" stroke="#2d2d39" stroke-width="1.3"/><path d="M2.4 5.5H8.6M5.5 2.4V8.6" stroke="#2d2d39" stroke-width="1.4" fill="none"/></g><g transform="translate(25 538.65)"><rect x=".7" y=".7" width="9.6" height="9.6" fill="#fff" stroke="#2d2d39" stroke-width="1.3"/><path d="M2.4 5.5H8.6M5.5 2.4V8.6" stroke="#2d2d39" stroke-width="1.4" fill="none"/></g><g transform="translate(25 564.9)"><rect x=".7" y=".7" width="9.6" height="9.6" fill="#fff" stroke="#2d2d39" stroke-width="1.3"/><path d="M2.4 5.5H8.6M5.5 2.4V8.6" stroke="#2d2d39" stroke-width="1.4" fill="none"/></g><g transform="translate(25 591.15)"><rect x=".7" y=".7" width="9.6" height="9.6" fill="#fff" stroke="#2d2d39" stroke-width="1.3"/><path d="M2.4 5.5H8.6M5.5 2.4V8.6" stroke="#2d2d39" stroke-width="1.4" fill="none"/></g><g transform="translate(25 617.4)"><rect x=".7" y=".7" width="9.6" height="9.6" fill="#fff" stroke="#2d2d39" stroke-width="1.3"/><path d="M2.4 5.5H8.6" stroke="#2d2d39" stroke-width="1.4" fill="none"/></g><g transform="translate(25 842.4)"><rect x=".7" y=".7" width="9.6" height="9.6" fill="#fff" stroke="#2d2d39" stroke-width="1.3"/><path d="M2.4 5.5H8.6M5.5 2.4V8.6" stroke="#2d2d39" stroke-width="1.4" fill="none"/></g><g transform="translate(25 868.65)"><rect x=".7" y=".7" width="9.6" height="9.6" fill="#fff" stroke="#2d2d39" stroke-width="1.3"/><path d="M2.4 5.5H8.6M5.5 2.4V8.6" stroke="#2d2d39" stroke-width="1.4" fill="none"/></g><g transform="translate(25 894.9)"><rect x=".7" y=".7" width="9.6" height="9.6" fill="#fff" stroke="#2d2d39" stroke-width="1.3"/><path d="M2.4 5.5H8.6M5.5 2.4V8.6" stroke="#2d2d39" stroke-width="1.4" fill="none"/></g><g transform="translate(25 921.15)"><rect x=".7" y=".7" width="9.6" height="9.6" fill="#fff" stroke="#2d2d39" stroke-width="1.3"/><path d="M2.4 5.5H8.6M5.5 2.4V8.6" stroke="#2d2d39" stroke-width="1.4" fill="none"/></g><g transform="translate(25 947.4)"><rect x=".7" y=".7" width="9.6" height="9.6" fill="#fff" stroke="#cfd0d7" stroke-width="1.3"/><path d="M2.4 5.5H8.6M5.5 2.4V8.6" stroke="#cfd0d7" stroke-width="1.4" fill="none"/></g></svg></div><svg style="left:9px;top:617px" width="8" height="12" viewBox="9 617 8 12"><path d="M10.5 619L15 623.6L10.5 628.2Z" fill="#1c1c28"/></svg><div class="a" style="left:19px;top:610px;width:23px;height:26px;border:3px solid #000"></div><div class="a" style="left:22px;top:636.75px;width:1230px;height:198.75px;background:#fff"></div><div class="a" style="left:49px;top:637px;width:1203px;height:199px;border:1px solid #b9bbc4;border-top:1px solid #b4b6c0;border-bottom:1px solid #adafb9;background:#fff"></div><div class="a" style="left:50px;top:666px;width:1196px;height:164px;border:1px solid #9c9eaa;background:#fff"></div><div class="a" style="left:54px;top:639px;width:62px;height:28px;border:1px solid #a7a9b4;border-bottom:none;background:#fff;border-radius:2px 2px 0 0"></div><span class="t" style="left:65.60px;top:646.80px;font-size:13.75px;line-height:15px;letter-spacing:-0.300px;color:#2b2b3a;transform:scaleX(0.9624);">Codes</span><div class="a" style="left:51px;top:667px;width:1194px;height:26px;background:linear-gradient(#f9fafc,#f3f4f7 50%,#eeeff3);border-bottom:1px solid #cdced6"></div><div class="a" style="left:70px;top:667px;width:1px;height:25px;background:#c9cad2"></div><div class="a" style="left:151px;top:667px;width:1px;height:25px;background:#c9cad2"></div><div class="a" style="left:395px;top:667px;width:1px;height:25px;background:#c9cad2"></div><div class="a" style="left:491px;top:667px;width:1px;height:25px;background:#c9cad2"></div><div class="a" style="left:571px;top:667px;width:1px;height:25px;background:#c9cad2"></div><div class="a" style="left:665px;top:667px;width:1px;height:25px;background:#c9cad2"></div><span class="t" style="left:75.60px;top:672.60px;font-size:13.75px;line-height:15px;letter-spacing:-0.300px;color:#2b2b3a;transform:scaleX(0.9637);">Code</span><span class="t" style="left:157.00px;top:672.60px;font-size:13.75px;line-height:15px;letter-spacing:-0.300px;color:#2b2b3a;transform:scaleX(0.9934);">CodeDescription</span><span class="t" style="left:400.60px;top:672.60px;font-size:13.75px;line-height:15px;letter-spacing:-0.253px;color:#2b2b3a;">CodeType</span><span class="t" style="left:496.50px;top:672.60px;font-size:13.75px;line-height:15px;letter-spacing:-0.017px;color:#2b2b3a;">Status</span><span class="t" style="left:576.70px;top:672.60px;font-size:13.75px;line-height:15px;letter-spacing:-0.188px;color:#2b2b3a;">SortOrder</span><svg style="left:134px;top:675px" width="12" height="8" viewBox="134 675 12 8"><path d="M136.3 681.6H144.3L140.3 677.4Z" fill="#2b2b3a"/></svg><svg style="left:54px;top:673px" width="14" height="14" viewBox="54 673 14 14"><circle cx="59.3" cy="678.3" r="2.3" fill="#d8d9e0" stroke="#3a3a48" stroke-width="1.3"/><path d="M61 680L64.2 683.4" stroke="#3a3a48" stroke-width="1.8"/></svg><div class="a" style="left:51px;top:693px;width:19px;height:26px;background:#f4f5f8"></div><div class="a" style="left:71px;top:693px;width:595px;height:26px;background:#feffe2"></div><div class="a" style="left:492px;top:693px;width:79px;height:26px;background:#e0feff"></div><div class="a" style="left:70px;top:693px;width:1px;height:26px;background:#d3d4dc"></div><div class="a" style="left:151px;top:693px;width:1px;height:26px;background:#d3d4dc"></div><div class="a" style="left:395px;top:693px;width:1px;height:26px;background:#d3d4dc"></div><div class="a" style="left:491px;top:693px;width:1px;height:26px;background:#d3d4dc"></div><div class="a" style="left:571px;top:693px;width:1px;height:26px;background:#d3d4dc"></div><div class="a" style="left:665px;top:693px;width:1px;height:26px;background:#d3d4dc"></div><svg style="left:55px;top:700px" width="10" height="14" viewBox="55 699 10 14"><ellipse cx="60" cy="703.5" rx="3" ry="2.6" fill="#1c1c28"/><path d="M59.1 704.5L59.6 711h.9l.5-6.5Z" fill="#1c1c28"/><ellipse cx="59.3" cy="702.8" rx="1" ry=".7" fill="#9a9aa6"/></svg><div class="a" style="left:51px;top:718px;width:615px;height:1px;background:#e6e6de"></div><div class="a" style="left:51px;top:719px;width:615px;height:2px;background:linear-gradient(#cbccd3,#d9dadf)"></div><div class="a" style="left:51px;top:721px;width:615px;height:1px;background:#fbfbfc"></div><div class="a" style="left:51px;top:722px;width:615px;height:1px;background:#e3e4e8"></div><div class="a" style="left:51px;top:723px;width:19px;height:106px;background:#f4f5f8"></div><div class="a" style="left:71px;top:723px;width:80px;height:27px;background:#fff"></div><div class="a" style="left:152px;top:723px;width:339px;height:27px;background:#feffe2"></div><div class="a" style="left:492px;top:723px;width:79px;height:27px;background:#ebebec"></div><div class="a" style="left:572px;top:723px;width:93px;height:27px;background:#fff"></div><div class="a" style="left:51px;top:749px;width:615px;height:1px;background:#d9dae1"></div><div class="a" style="left:70px;top:723px;width:1px;height:27px;background:#d3d4dc"></div><div class="a" style="left:151px;top:723px;width:1px;height:27px;background:#d3d4dc"></div><div class="a" style="left:395px;top:723px;width:1px;height:27px;background:#d3d4dc"></div><div class="a" style="left:491px;top:723px;width:1px;height:27px;background:#d3d4dc"></div><div class="a" style="left:571px;top:723px;width:1px;height:27px;background:#d3d4dc"></div><div class="a" style="left:665px;top:723px;width:1px;height:27px;background:#d3d4dc"></div><span class="t" style="left:75.60px;top:728.80px;font-size:13.75px;line-height:15px;letter-spacing:-0.300px;color:#2b2b3a;transform:scaleX(0.8666);">DM</span><span class="t" style="left:157.00px;top:728.80px;font-size:13.75px;line-height:15px;letter-spacing:-0.118px;color:#2b2b3a;">Default Methodology</span><span class="t" style="left:400.60px;top:728.80px;font-size:13.75px;line-height:15px;letter-spacing:-0.300px;color:#2b2b3a;transform:scaleX(0.9637);">None</span><span class="t" style="left:495.59px;top:728.80px;font-size:13.75px;line-height:15px;letter-spacing:0.000px;color:#2b2b3a;">A</span><span class="t" style="left:653.36px;top:728.80px;font-size:13.75px;line-height:15px;letter-spacing:0.000px;color:#2b2b3a;">1</span><div class="a" style="left:71px;top:750px;width:80px;height:26px;background:#fff"></div><div class="a" style="left:152px;top:750px;width:339px;height:26px;background:#feffe2"></div><div class="a" style="left:492px;top:750px;width:79px;height:26px;background:#ebebec"></div><div class="a" style="left:572px;top:750px;width:93px;height:26px;background:#fff"></div><div class="a" style="left:51px;top:775px;width:615px;height:1px;background:#d9dae1"></div><div class="a" style="left:70px;top:750px;width:1px;height:26px;background:#d3d4dc"></div><div class="a" style="left:151px;top:750px;width:1px;height:26px;background:#d3d4dc"></div><div class="a" style="left:395px;top:750px;width:1px;height:26px;background:#d3d4dc"></div><div class="a" style="left:491px;top:750px;width:1px;height:26px;background:#d3d4dc"></div><div class="a" style="left:571px;top:750px;width:1px;height:26px;background:#d3d4dc"></div><div class="a" style="left:665px;top:750px;width:1px;height:26px;background:#d3d4dc"></div><span class="t" style="left:75.60px;top:755.00px;font-size:13.75px;line-height:15px;letter-spacing:-0.300px;color:#2b2b3a;transform:scaleX(0.8910);">INST</span><span class="t" style="left:157.00px;top:755.00px;font-size:13.75px;line-height:15px;letter-spacing:-0.021px;color:#2b2b3a;">Installation</span><span class="t" style="left:400.60px;top:755.00px;font-size:13.75px;line-height:15px;letter-spacing:-0.300px;color:#2b2b3a;transform:scaleX(0.9637);">None</span><span class="t" style="left:495.59px;top:755.00px;font-size:13.75px;line-height:15px;letter-spacing:0.000px;color:#2b2b3a;">A</span><span class="t" style="left:653.36px;top:755.00px;font-size:13.75px;line-height:15px;letter-spacing:0.000px;color:#2b2b3a;">1</span><div class="a" style="left:71px;top:776px;width:80px;height:26px;background:#fff"></div><div class="a" style="left:152px;top:776px;width:339px;height:26px;background:#feffe2"></div><div class="a" style="left:492px;top:776px;width:79px;height:26px;background:#ebebec"></div><div class="a" style="left:572px;top:776px;width:93px;height:26px;background:#fff"></div><div class="a" style="left:51px;top:801px;width:615px;height:1px;background:#d9dae1"></div><div class="a" style="left:70px;top:776px;width:1px;height:26px;background:#d3d4dc"></div><div class="a" style="left:151px;top:776px;width:1px;height:26px;background:#d3d4dc"></div><div class="a" style="left:395px;top:776px;width:1px;height:26px;background:#d3d4dc"></div><div class="a" style="left:491px;top:776px;width:1px;height:26px;background:#d3d4dc"></div><div class="a" style="left:571px;top:776px;width:1px;height:26px;background:#d3d4dc"></div><div class="a" style="left:665px;top:776px;width:1px;height:26px;background:#d3d4dc"></div><span class="t" style="left:75.60px;top:781.20px;font-size:13.75px;line-height:15px;letter-spacing:-0.300px;color:#2b2b3a;transform:scaleX(0.8793);">NETC</span><span class="t" style="left:157.00px;top:781.20px;font-size:13.75px;line-height:15px;letter-spacing:-0.082px;color:#2b2b3a;">Network Configuration</span><span class="t" style="left:400.60px;top:781.20px;font-size:13.75px;line-height:15px;letter-spacing:-0.300px;color:#2b2b3a;transform:scaleX(0.9637);">None</span><span class="t" style="left:495.59px;top:781.20px;font-size:13.75px;line-height:15px;letter-spacing:0.000px;color:#2b2b3a;">A</span><span class="t" style="left:653.56px;top:781.20px;font-size:13.75px;line-height:15px;letter-spacing:0.000px;color:#2b2b3a;">3</span><div class="a" style="left:71px;top:802px;width:80px;height:27px;background:#fff"></div><div class="a" style="left:152px;top:802px;width:513px;height:27px;background:#f0f0f3"></div><div class="a" style="left:51px;top:828px;width:615px;height:1px;background:#d9dae1"></div><div class="a" style="left:70px;top:802px;width:1px;height:27px;background:#d3d4dc"></div><div class="a" style="left:151px;top:802px;width:1px;height:27px;background:#d3d4dc"></div><div class="a" style="left:395px;top:802px;width:1px;height:27px;background:#d3d4dc"></div><div class="a" style="left:491px;top:802px;width:1px;height:27px;background:#d3d4dc"></div><div class="a" style="left:571px;top:802px;width:1px;height:27px;background:#d3d4dc"></div><div class="a" style="left:665px;top:802px;width:1px;height:27px;background:#d3d4dc"></div><svg style="left:55px;top:806px" width="12" height="16" viewBox="55 806 12 16"><path d="M60.2 808.3L62.8 808.8L60.6 818.4L58 820.4L57.9 817.6Z" fill="#fff" stroke="#22222e" stroke-width="1.3"/><path d="M62.3 820.4H64.5" stroke="#22222e" stroke-width="1.4"/></svg><div class="a" style="left:69.3px;top:773.3px;width:599px;height:57.4px;border:3px solid #000"></div><div class="a" style="left:1253px;top:213px;width:22px;height:746px;background:#f4f4f7"></div><svg style="left:1255px;top:215px" width="18" height="745" viewBox="1255 215 18 745"><path d="M1258.8 226H1267.8L1263.3 221.3Z M1258.8 945.6H1267.8L1263.3 950.4Z" fill="#8d8f9b"/><rect x="1259.6" y="697.5" width="7.4" height="115" rx="3.7" fill="#e4e5eb" stroke="#b3b5c0"/></svg><div class="a" style="left:2px;top:959px;width:1273px;height:32px;background:linear-gradient(#e1e2e7,#d4d5db 50%,#c6c7ce);border-top:1px solid #9fa1ac"></div><div class="a" style="left:2px;top:960px;width:1273px;height:1px;background:#bfc0c8"></div><span class="t" style="left:11.20px;top:970.30px;font-size:13.75px;line-height:15px;letter-spacing:-0.300px;color:#2b2b3a;transform:scaleX(0.9894);">Open Windows</span><svg style="left:103px;top:973px" width="12" height="8" viewBox="103 973 12 8"><path d="M105 974.5H113.2L109.1 978.8Z" fill="#2b2b3a"/></svg><div class="a" style="left:1101px;top:964px;width:1px;height:24px;background:#b7b9c2"></div><div class="a" style="left:1102px;top:964px;width:1px;height:24px;background:#e6e7ec"></div><div class="a" style="left:1116px;top:964px;width:123px;height:28px;background:#fff;border:1px solid #c0c2cb;border-top-color:#a6a8b3;border-bottom:none"></div><span class="t" style="left:1122.30px;top:969.70px;font-size:13.75px;line-height:15px;letter-spacing:-0.300px;color:#2b2b3a;transform:scaleX(0.9827);">27 Mar 2018</span><svg style="left:1222px;top:966px" width="14" height="24" viewBox="1222 966 14 24"><path d="M1225 973.8H1233.2L1229.1 969Z M1225 981.5H1233.2L1229.1 986.2Z" fill="#1c1c28"/></svg><svg style="left:1258px;top:975px" width="16" height="16" viewBox="1258 975 16 16"><path d="M1258 988.5L1270 976.5M1262.7 988.5L1270 981.2M1267 988.5L1270 985.5" stroke="#8a8c98" stroke-width="1.2"/></svg><div class="a" style="left:0px;top:0px;width:1277px;height:993px;border:2px solid #000;pointer-events:none"></div></body></html>
